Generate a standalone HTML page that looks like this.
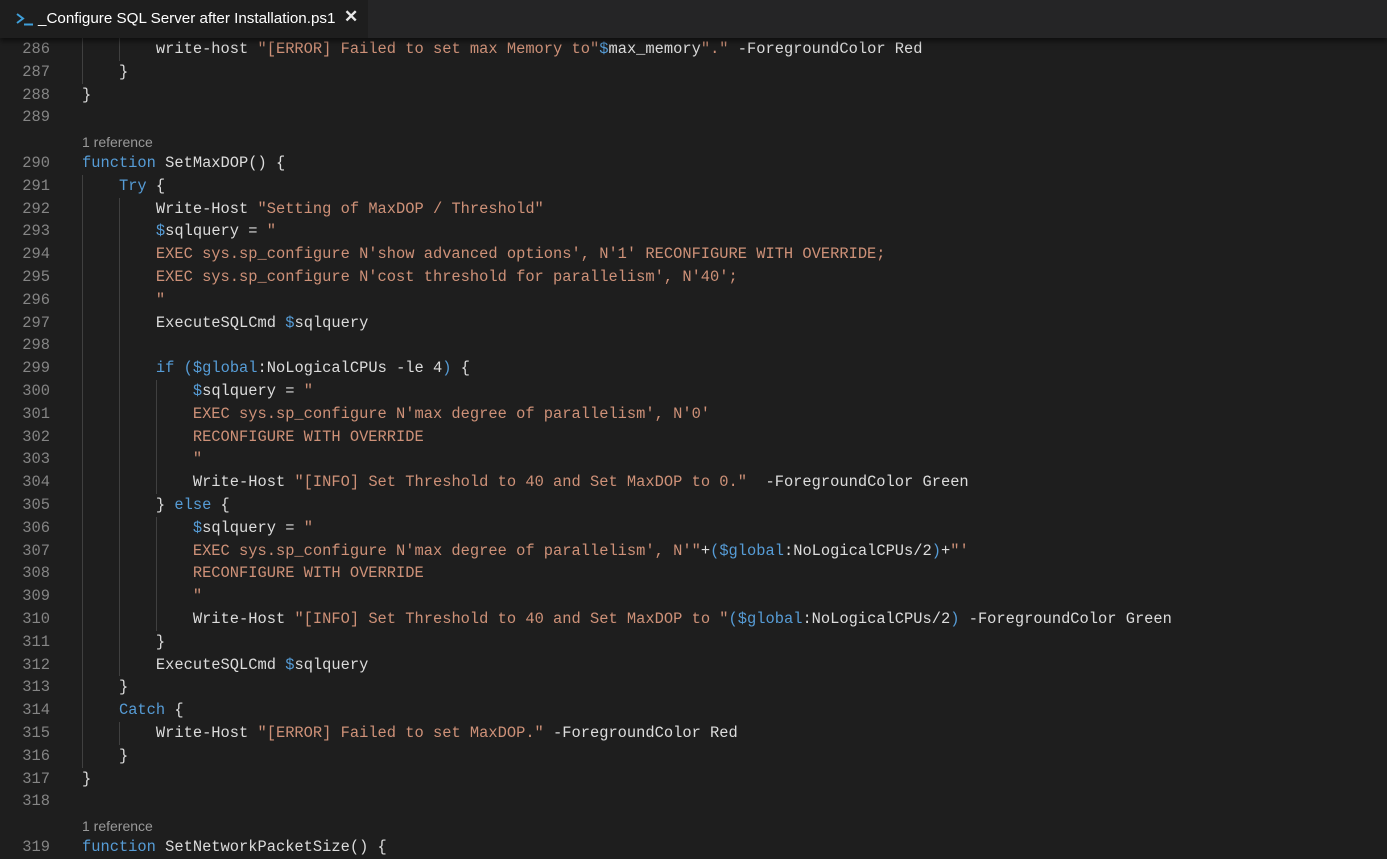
<!DOCTYPE html>
<html><head><meta charset="utf-8">
<style>
html,body{margin:0;padding:0;background:#1e1e1e;width:1387px;height:858px;overflow:hidden}
.tabs{position:absolute;left:0;top:0;width:1387px;height:38px;background:#252526;box-shadow:0 3px 6px rgba(0,0,0,0.6);z-index:2}
.tab{position:absolute;left:0;top:0;width:368px;height:38px;background:#1e1e1e;font-family:"Liberation Sans",sans-serif;font-size:15.2px;color:#fff}
.tab .t{position:absolute;left:38px;top:10px;white-space:nowrap}
.tab .x{position:absolute;left:344px;top:7px;font-size:17px;font-weight:bold;color:#e8e8e8}
.ed{position:absolute;left:0;top:38px;width:1387px}
.row{position:relative;height:22.8px;line-height:22.8px;font-family:"Liberation Mono",monospace;font-size:15.4px;color:#dcdcdc;white-space:pre}
.ln{position:absolute;left:0;width:50px;text-align:right;color:#858585}
.c{position:absolute;left:82px}
.ref{font-family:"Liberation Sans",sans-serif;font-size:14px;color:#999;line-height:27px}
.g{position:absolute;top:0;width:1px;height:22.8px;background:#404040}
.k{color:#569cd6}.s{color:#ce9178}.b{color:#569cd6}
</style></head><body>
<div class="tabs"><div class="tab">
<svg style="position:absolute;left:16px;top:13px" width="18" height="13" viewBox="0 0 18 13"><path d="M1 1 L7 5.5 L1 10" fill="none" stroke="#3f9fd9" stroke-width="2"/><path d="M8 11.5 H17" stroke="#3f9fd9" stroke-width="2"/></svg>
<span class="t">_Configure SQL Server after Installation.ps1</span><span class="x">✕</span></div></div>
<div class="ed" id="ed"></div>
<script>
var L=[
[286,2,'        write-host <span class="s">"[ERROR] Failed to set max Memory to"</span><span class="b">$</span>max_memory<span class="s">"."</span> -ForegroundColor Red'],
[287,1,'    }'],
[288,0,'}'],
[289,0,''],
['R',0,''],
[290,0,'<span class="k">function</span> SetMaxDOP() {'],
[291,1,'    <span class="k">Try</span> {'],
[292,2,'        Write-Host <span class="s">"Setting of MaxDOP / Threshold"</span>'],
[293,2,'        <span class="b">$</span>sqlquery = <span class="s">"</span>'],
[294,2,'<span class="s">        EXEC sys.sp_configure N\'show advanced options\', N\'1\' RECONFIGURE WITH OVERRIDE;</span>'],
[295,2,'<span class="s">        EXEC sys.sp_configure N\'cost threshold for parallelism\', N\'40\';</span>'],
[296,2,'<span class="s">        "</span>'],
[297,2,'        ExecuteSQLCmd <span class="b">$</span>sqlquery'],
[298,2,''],
[299,2,'        <span class="k">if</span> <span class="b">(</span><span class="b">$global</span>:NoLogicalCPUs -le 4<span class="b">)</span> {'],
[300,3,'            <span class="b">$</span>sqlquery = <span class="s">"</span>'],
[301,3,'<span class="s">            EXEC sys.sp_configure N\'max degree of parallelism\', N\'0\'</span>'],
[302,3,'<span class="s">            RECONFIGURE WITH OVERRIDE</span>'],
[303,3,'<span class="s">            "</span>'],
[304,3,'            Write-Host <span class="s">"[INFO] Set Threshold to 40 and Set MaxDOP to 0."</span>  -ForegroundColor Green'],
[305,2,'        } <span class="k">else</span> {'],
[306,3,'            <span class="b">$</span>sqlquery = <span class="s">"</span>'],
[307,3,'<span class="s">            EXEC sys.sp_configure N\'max degree of parallelism\', N\'"</span>+<span class="b">(</span><span class="b">$global</span>:NoLogicalCPUs/2<span class="b">)</span>+<span class="s">"\'</span>'],
[308,3,'<span class="s">            RECONFIGURE WITH OVERRIDE</span>'],
[309,3,'<span class="s">            "</span>'],
[310,3,'            Write-Host <span class="s">"[INFO] Set Threshold to 40 and Set MaxDOP to "</span><span class="b">(</span><span class="b">$global</span>:NoLogicalCPUs/2<span class="b">)</span> -ForegroundColor Green'],
[311,2,'        }'],
[312,2,'        ExecuteSQLCmd <span class="b">$</span>sqlquery'],
[313,1,'    }'],
[314,1,'    <span class="k">Catch</span> {'],
[315,2,'        Write-Host <span class="s">"[ERROR] Failed to set MaxDOP."</span> -ForegroundColor Red'],
[316,1,'    }'],
[317,0,'}'],
[318,0,''],
['R',0,''],
[319,0,'<span class="k">function</span> SetNetworkPacketSize() {']
];
var h='';
L.forEach(function(r){
 if(r[0]==='R'){h+='<div class="row"><span class="c ref">1 reference</span></div>';return;}
 var g='';
 var gx=[82,119,156];
 var n=r[1];
 for(var i=0;i<Math.min(n,3);i++){
   g+='<span class="g" style="left:'+gx[i]+'px"></span>';
 }
 h+='<div class="row"><span class="ln">'+r[0]+'</span>'+g+'<span class="c">'+r[2]+'</span></div>';
});
document.getElementById('ed').innerHTML=h;
</script>
</body></html>
